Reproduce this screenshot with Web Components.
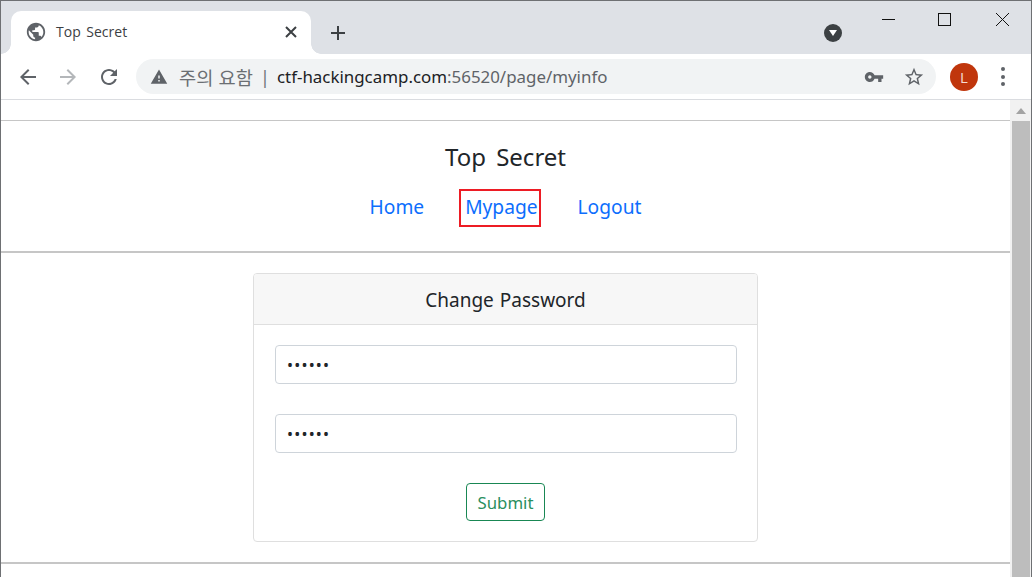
<!DOCTYPE html>
<html lang="ko"><head><meta charset="utf-8"><title>Top Secret</title>
<style>
html,body{margin:0;padding:0;height:100%;overflow:hidden;background:#fff}
body{font-family:"Noto Sans","Noto Sans CJK KR",sans-serif}
</style></head><body>
<browser-window>
  <browser-tabstrip slot="chrome"></browser-tabstrip>
  <browser-toolbar slot="chrome"></browser-toolbar>
  <site-header></site-header>
  <password-card></password-card>
</browser-window>
<script>
function def(name, html){
  customElements.define(name, class extends HTMLElement{
    constructor(){super();this.attachShadow({mode:'open'}).innerHTML=html;}
  });
}
const ic=(d,s,c,extra='')=>`<svg width="${s}" height="${s}" viewBox="0 0 24 24" fill="${c}" ${extra}><path d="${d}"/></svg>`;

def('browser-window',`<style>
:host{display:flex;flex-direction:column;width:1032px;height:577px;box-sizing:border-box;border:1px solid #6e7073;border-bottom:0;overflow:hidden;background:#fff}
.view{flex:1;display:flex;min-height:0}
main{flex:1;min-width:0;display:flex;flex-direction:column;padding-top:20px}
hr{margin:0;border:0;height:1px;background:#c6c6c6;flex:none}
hr.b{height:2px}
</style><slot name="chrome"></slot>
<div class="view"><main><hr><slot></slot><hr class="b"></main><page-scrollbar></page-scrollbar></div>`);

def('page-scrollbar',`<style>
:host{display:flex;flex-direction:column;align-items:center;flex:none;width:21px;background:#f1f1f1;box-sizing:border-box}
.up{height:21px;flex:none;display:flex;align-items:center;justify-content:center}
.thumb{width:18px;flex:1;background:#bdbdbd}
</style><div class="up"><svg width="10" height="6" viewBox="0 0 10 6"><path d="M5 0 10 6H0z" fill="#a3a3a3"/></svg></div><div class="thumb"></div>`);

def('browser-tabstrip',`<style>
:host{display:flex;flex:none;height:53px;background:#dee1e6;position:relative;align-items:flex-end;padding-left:10px;font-family:"Open Sans","Noto Sans",sans-serif}
.tab{position:relative;width:300px;height:43px;box-sizing:border-box;background:#fff;border-radius:10px 10px 0 0;display:flex;align-items:center;padding:0 13px 2px 14px;color:#3c4043;font-size:14px}
.tab::before,.tab::after{content:"";position:absolute;bottom:0;width:10px;height:10px;background:radial-gradient(circle at 0 0,#dee1e6 9.5px,#fff 10px)}
.tab::before{left:-10px}
.tab::after{right:-10px;transform:scaleX(-1)}
.title{margin-left:9px;flex:1;white-space:nowrap;word-spacing:2px}
.plus{margin:0 0 12px 18px;display:flex}
.down{position:absolute;left:823px;top:23px;width:18px;height:18px;border-radius:50%;background:#3c4043;display:flex;align-items:center;justify-content:center}
.win{position:absolute;top:0;right:0;display:flex}
.win svg{display:block}
</style>
<div class="tab"><svg width="22" height="22" viewBox="0 0 24 24" fill="#5f6368"><path d="M12 2C6.48 2 2 6.48 2 12s4.48 10 10 10 10-4.48 10-10S17.52 2 12 2zm-1 17.93c-3.95-.49-7-3.85-7-7.93 0-.62.08-1.21.21-1.79L9 15v1c0 1.1.9 2 2 2v1.93zm6.9-2.54c-.26-.81-1-1.39-1.9-1.39h-1v-3c0-.55-.45-1-1-1H8v-2h2c.55 0 1-.45 1-1V7h2c1.1 0 2-.9 2-2v-.41c2.93 1.19 5 4.06 5 7.41 0 2.08-.8 3.97-2.1 5.39z"/></svg>
<span class="title">Top Secret</span>
<svg width="14" height="14" viewBox="0 0 14 14" stroke="#3c4043" stroke-width="2" fill="none"><path d="M2 2 12 12M12 2 2 12"/></svg></div>
<div class="plus"><svg width="18" height="18" viewBox="0 0 18 18" stroke="#3c4043" stroke-width="2" fill="none"><path d="M9 2V16M2 9H16"/></svg></div>
<div class="down"><svg width="8" height="6" viewBox="0 0 8 6"><path d="M0 0H8L4 6z" fill="#fff"/></svg></div>
<div class="win"><svg width="149" height="36" viewBox="0 0 149 36" fill="none" stroke="#111" stroke-width="1" shape-rendering="crispEdges"><path d="M0 18.5H13"/><rect x="56.5" y="12.5" width="12" height="12"/><path d="M114 12 127 25M127 12 114 25" shape-rendering="auto"/></svg></div>`);

def('browser-toolbar',`<style>
:host{display:flex;flex:none;align-items:center;height:46px;box-sizing:border-box;border-bottom:1px solid #dadce0;background:#fff;position:relative}
.btn{width:40px;height:40px;flex:none;display:flex;align-items:center;justify-content:center}
.nav{display:flex;margin:0 0 0 7px}
.nav .btn:last-child{margin-left:1px}
.omni{margin:0 0 0 7px;width:800px;height:35px;border-radius:18px;background:#f1f3f4;flex:none;display:flex;align-items:center;box-sizing:border-box;padding-left:14px;font-size:16.9px;white-space:nowrap;color:#5f6368}
.warn{display:flex;width:18px}
.ko{margin-left:11px;font-family:"Noto Sans CJK KR","Noto Sans",sans-serif;font-size:18.7px;color:#6b6f73}
.sep{margin:0 7px 0 7px;font-size:18px;color:#70757a}
.h{color:#202124}
.r{flex:1}
.key{display:flex;margin-right:19px}
.star{display:flex;margin-right:11px}
.av{margin:0 0 0 14px;width:28px;height:28px;border-radius:50%;background:#c0360c;color:#f6dcd2;display:flex;align-items:center;justify-content:center;font:15px "Open Sans",sans-serif;flex:none}
.menu{margin:0 0 0 23px;width:4px;display:flex;flex-direction:column;gap:3.4px}
.menu i{display:block;width:4px;height:4px;border-radius:50%;background:#5f6368}
</style>
<div class="nav"><div class="btn">${ic('M20 11H7.83l5.59-5.59L12 4l-8 8 8 8 1.41-1.41L7.83 13H20v-2z',24,'#5f6368')}</div>
<div class="btn">${ic('M20 11H7.83l5.59-5.59L12 4l-8 8 8 8 1.41-1.41L7.83 13H20v-2z',24,'#b4b7ba','style="transform:scaleX(-1)"')}</div>
<div class="btn">${ic('M17.65 6.35C16.2 4.9 14.21 4 12 4c-4.42 0-7.99 3.58-7.99 8s3.57 8 7.99 8c3.73 0 6.84-2.55 7.73-6h-2.08c-.82 2.33-3.04 4-5.65 4-3.31 0-6-2.69-6-6s2.69-6 6-6c1.66 0 3.14.69 4.22 1.78L13 11h7V4l-2.35 2.35z',24,'#5f6368')}</div></div>
<div class="omni"><span class="warn">${ic('M1 21h22L12 2 1 21zm12-3h-2v-2h2v2zm0-4h-2v-4h2v4z',18,'#5f6368')}</span>
<span class="ko">주의 요함</span><span class="sep">|</span><span><span class="h">ctf-hackingcamp.com</span>:56520/page/myinfo</span><span class="r"></span>
<span class="key">${ic('M12.65 10C11.83 7.67 9.61 6 7 6c-3.31 0-6 2.69-6 6s2.69 6 6 6c2.61 0 4.83-1.67 5.65-4H17v4h4v-4h2v-4H12.65zM7 14c-1.1 0-2-.9-2-2s.9-2 2-2 2 .9 2 2-.9 2-2 2z',20,'#5f6368')}</span>
<span class="star">${ic('M22 9.24l-7.19-.62L12 2 9.19 8.63 2 9.24l5.46 4.73L5.82 21 12 17.27 18.18 21l-1.63-7.03L22 9.24zM12 15.4l-3.76 2.27 1-4.28-3.32-2.88 4.38-.38L12 6.1l1.71 4.04 4.38.38-3.32 2.88 1 4.28L12 15.4z',22,'#5f6368')}</span></div>
<div class="av">L</div><div class="menu"><i></i><i></i><i></i></div>`);

def('site-header',`<style>
:host{display:block;text-align:center;color:#212529;border-bottom:2px solid #c6c6c6;box-sizing:border-box;height:132px}
h1{margin:0;padding-top:18px;font-weight:400;font-size:24px;line-height:36px;word-spacing:4px;color:#212529}
nav{display:flex;justify-content:center;align-items:center;margin-top:14px;height:38px;font-size:19.2px}
a{color:#0d6efd;text-decoration:none;white-space:nowrap}
a:not(.on){margin-top:-4px}
.on{border:2px solid #ed1c24;padding:0 1px 4px 4px;height:38px;box-sizing:border-box;display:flex;align-items:center;margin:0 37px 0 35px}
</style><h1>Top Secret</h1><nav><a href="#">Home</a><a class="on" href="#">Mypage</a><a href="#">Logout</a></nav>`);

def('password-card',`<style>
:host{display:block;width:505px;height:269px;box-sizing:border-box;margin:20px auto 20px;border:1px solid #dfdfdf;border-radius:4px;color:#212529;font-size:16px;overflow:hidden;flex:none}
header{height:51px;box-sizing:border-box;background:#f7f7f7;border-bottom:1px solid #dfdfdf;display:flex;align-items:center;justify-content:center;font-size:19px;word-spacing:1px;padding:2px 0 0}
form{display:flex;flex-direction:column;padding:20px 20px 0 21px;gap:30px;align-items:stretch}
input{box-sizing:border-box;height:39px;width:462px;border:1px solid #ced4da;border-radius:4px;padding:0 11px;font:16px "Noto Sans",sans-serif;letter-spacing:1.2px;color:#212529;background:#fff;outline:0}
button{align-self:center;height:38px;width:79px;background:#fff;border:1px solid #198754;border-radius:4px;color:#2a8f60;font:16.8px "Noto Sans",sans-serif;padding:0;margin-right:1px}
</style><header>Change Password</header><form onsubmit="return false"><input type="password" value="secret"><input type="password" value="secret"><button type="button">Submit</button></form>`);
</script>
</body></html>
